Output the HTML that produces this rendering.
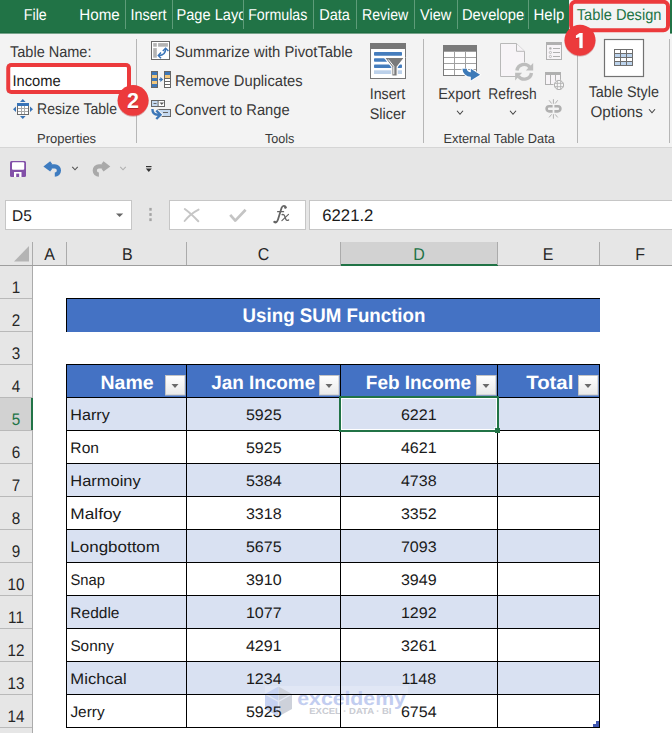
<!DOCTYPE html>
<html><head><meta charset="utf-8"><title>Excel Table Design</title>
<style>
html,body{margin:0;padding:0;width:672px;height:733px;overflow:hidden;background:#fff;}
body{position:relative;font-family:'Liberation Sans', sans-serif;}
</style></head><body>
<svg width="672" height="733" viewBox="0 0 672 733" text-rendering="geometricPrecision" style="position:absolute;left:0;top:0;font-family:'Liberation Sans', sans-serif"><defs><linearGradient id="ddg" x1="0" y1="0" x2="0" y2="1"><stop offset="0" stop-color="#ffffff"/><stop offset="1" stop-color="#e9e9e9"/></linearGradient></defs><rect x="0" y="0" width="672" height="33.8" fill="#217346"/><rect x="0" y="32.3" width="672" height="1.5" fill="#1c6a3f"/>
<rect x="0" y="33.6" width="672" height="114.4" fill="#f3f3f3"/>
<rect x="0" y="147" width="672" height="1" fill="#d5d5d5"/>
<rect x="0" y="148" width="672" height="118" fill="#e6e6e6"/>
<rect x="125" y="0" width="1" height="29" fill="#5e9c79"/>
<rect x="172" y="0" width="1" height="29" fill="#5e9c79"/>
<rect x="243" y="0" width="1" height="29" fill="#5e9c79"/>
<rect x="313" y="0" width="1" height="29" fill="#5e9c79"/>
<rect x="356" y="0" width="1" height="29" fill="#5e9c79"/>
<rect x="414" y="0" width="1" height="29" fill="#5e9c79"/>
<rect x="457" y="0" width="1" height="29" fill="#5e9c79"/>
<rect x="528" y="0" width="1" height="29" fill="#5e9c79"/>
<text x="23.8" y="20" font-size="15.8" fill="#ffffff" font-weight="400" textLength="22.92" lengthAdjust="spacingAndGlyphs">File</text>
<text x="79.32" y="20" font-size="15.8" fill="#ffffff" font-weight="400" textLength="40.41" lengthAdjust="spacingAndGlyphs">Home</text>
<text x="130.54" y="20" font-size="15.8" fill="#ffffff" font-weight="400" textLength="35.97" lengthAdjust="spacingAndGlyphs">Insert</text>
<text x="248.15" y="20" font-size="15.8" fill="#ffffff" font-weight="400" textLength="59.21" lengthAdjust="spacingAndGlyphs">Formulas</text>
<text x="319.14" y="20" font-size="15.8" fill="#ffffff" font-weight="400" textLength="30.75" lengthAdjust="spacingAndGlyphs">Data</text>
<text x="362.05" y="20" font-size="15.8" fill="#ffffff" font-weight="400" textLength="46.22" lengthAdjust="spacingAndGlyphs">Review</text>
<text x="420.06" y="20" font-size="15.8" fill="#ffffff" font-weight="400" textLength="31.25" lengthAdjust="spacingAndGlyphs">View</text>
<text x="533.53" y="20" font-size="15.8" fill="#ffffff" font-weight="400" textLength="30.77" lengthAdjust="spacingAndGlyphs">Help</text>
<svg x="0" y="0" width="243" height="33" overflow="hidden"><text x="176.5" y="20" font-size="15.8" fill="#ffffff" textLength="82" lengthAdjust="spacingAndGlyphs">Page Layout</text></svg>
<svg x="0" y="0" width="524.5" height="33" overflow="hidden"><text x="462" y="20" font-size="15.8" fill="#ffffff" textLength="67" lengthAdjust="spacingAndGlyphs">Developer</text></svg>
<rect x="569" y="0" width="101" height="34" fill="#f3f3f3"/>
<text x="576.8" y="20" font-size="15.8" fill="#217346" font-weight="400" textLength="84.67" lengthAdjust="spacingAndGlyphs">Table Design</text>
<rect x="571.1" y="1.8" width="96.9" height="28.4" rx="4.5" fill="none" stroke="#ec3a3c" stroke-width="4"/>
<text x="10.0" y="56.7" font-size="15.5" fill="#383838" font-weight="400" textLength="81.48" lengthAdjust="spacingAndGlyphs">Table Name:</text>
<rect x="8" y="65" width="121" height="27" fill="#ffffff" stroke="#5a5a5a" stroke-width="1"/>
<text x="12.42" y="85.8" font-size="15.5" fill="#1a1a1a" font-weight="400" textLength="48.3" lengthAdjust="spacingAndGlyphs">Income</text>
<rect x="8.25" y="65" width="120.75" height="27" rx="3" fill="none" stroke="#ec3a3c" stroke-width="4"/>
<text x="37.05" y="114.4" font-size="15.5" fill="#383838" font-weight="400" textLength="79.92" lengthAdjust="spacingAndGlyphs">Resize Table</text>
<text x="37.01" y="142.5" font-size="13.2" fill="#383838" font-weight="400" textLength="59.11" lengthAdjust="spacingAndGlyphs">Properties</text>
<rect x="136" y="39" width="1" height="104" fill="#b6b6b6"/>
<text x="174.92" y="57.3" font-size="15.5" fill="#383838" font-weight="400" textLength="177.95" lengthAdjust="spacingAndGlyphs">Summarize with PivotTable</text>
<text x="174.92" y="86.4" font-size="15.5" fill="#383838" font-weight="400" textLength="127.69" lengthAdjust="spacingAndGlyphs">Remove Duplicates</text>
<text x="174.53" y="115.2" font-size="15.5" fill="#383838" font-weight="400" textLength="115.07" lengthAdjust="spacingAndGlyphs">Convert to Range</text>
<text x="264.88" y="143" font-size="13.2" fill="#383838" font-weight="400" textLength="29.43" lengthAdjust="spacingAndGlyphs">Tools</text>
<text x="369.74" y="99" font-size="15.5" fill="#383838" font-weight="400" textLength="35.58" lengthAdjust="spacingAndGlyphs">Insert</text>
<text x="369.74" y="118.9" font-size="15.5" fill="#383838" font-weight="400" textLength="36.05" lengthAdjust="spacingAndGlyphs">Slicer</text>
<rect x="423" y="39" width="1" height="104" fill="#b6b6b6"/>
<text x="438.13" y="98.8" font-size="15.5" fill="#383838" font-weight="400" textLength="42.22" lengthAdjust="spacingAndGlyphs">Export</text>
<text x="488.36" y="98.8" font-size="15.5" fill="#383838" font-weight="400" textLength="48.3" lengthAdjust="spacingAndGlyphs">Refresh</text>
<text x="443.52" y="142.6" font-size="13.2" fill="#383838" font-weight="400" textLength="111.36" lengthAdjust="spacingAndGlyphs">External Table Data</text>
<rect x="577" y="39" width="1" height="104" fill="#b6b6b6"/>
<rect x="669" y="39" width="1" height="104" fill="#b6b6b6"/>
<text x="588.7" y="96.6" font-size="15.5" fill="#383838" font-weight="400" textLength="70.3" lengthAdjust="spacingAndGlyphs">Table Style</text>
<text x="590.51" y="116.7" font-size="15.5" fill="#383838" font-weight="400" textLength="52.41" lengthAdjust="spacingAndGlyphs">Options</text>
<path d="M457.0,110.75 L460,114.25 L463.0,110.75" fill="none" stroke="#444" stroke-width="1.1"/>
<path d="M510.0,110.75 L513,114.25 L516.0,110.75" fill="none" stroke="#444" stroke-width="1.1"/>
<path d="M649.0,109.25 L652,112.75 L655.0,109.25" fill="none" stroke="#444" stroke-width="1.1"/>
<g><rect x="17" y="103" width="12" height="12" fill="#6a6a6a"/><rect x="18" y="106" width="10" height="8" fill="#a8a8a8"/><rect x="17" y="103" width="12" height="3" fill="#3a74b7"/><rect x="18" y="106" width="3" height="2" fill="#fff"/><rect x="18" y="109" width="3" height="2" fill="#fff"/><rect x="18" y="112" width="3" height="2" fill="#fff"/><rect x="22" y="106" width="2" height="2" fill="#fff"/><rect x="22" y="109" width="2" height="2" fill="#fff"/><rect x="22" y="112" width="2" height="2" fill="#fff"/><rect x="25" y="106" width="3" height="2" fill="#fff"/><rect x="25" y="109" width="3" height="2" fill="#fff"/><rect x="25" y="112" width="3" height="2" fill="#fff"/><path d="M22.8,98.9 L20,101.9 H25.6 Z M22.8,119.1 L20,116.1 H25.6 Z M13,109.3 L16,106.6 V112 Z M33,109.3 L30,106.6 V112 Z" fill="#3a74b7"/></g>
<g><rect x="151.5" y="41.5" width="18" height="18" fill="#fff" stroke="#6a6a6a" stroke-width="1"/><rect x="153.2" y="43.1" width="3.6" height="3.6" fill="#b3b3b3"/><rect x="158.1" y="43.1" width="9.8" height="3.6" fill="#b3b3b3"/><rect x="153.2" y="48.1" width="3.6" height="9.6" fill="#b3b3b3"/><path d="M158.8,55.5 Q165.6,55.5 165.6,48.8" fill="none" stroke="#3a74b7" stroke-width="1.5"/><path d="M161,52.6 L158.3,55.5 L161,58.3 M162.8,51 L165.6,48.2 L168.4,51" fill="none" stroke="#3a74b7" stroke-width="1.5"/></g>
<rect x="151" y="71" width="7" height="17" fill="#666"/><rect x="152" y="72" width="5" height="3" fill="#3d77b8"/><rect x="152" y="75" width="5" height="3" fill="#f3c77a"/><rect x="152" y="78" width="5" height="3" fill="#3d77b8"/><rect x="152" y="81" width="5" height="3" fill="#f3c77a"/><rect x="152" y="84" width="5" height="3" fill="#3d77b8"/>
<rect x="164" y="71" width="7" height="17" fill="#666"/><rect x="165" y="72" width="5" height="3" fill="#3d77b8"/><rect x="165" y="75" width="5" height="3" fill="#f3c77a"/><rect x="165" y="79" width="5" height="2" fill="#fff"/><rect x="165" y="82" width="5" height="2" fill="#fff"/><rect x="165" y="85" width="5" height="2" fill="#fff"/>
<path d="M159,79.5 H162" stroke="#3d77b8" stroke-width="1.4" fill="none"/><path d="M160.3,76.9 L163.3,79.5 L160.3,82.1 Z" fill="#3d77b8"/>
<g><rect x="151.5" y="100.5" width="13" height="6" fill="#fff" stroke="#666" stroke-width="1"/><rect x="152" y="101" width="6" height="5" fill="#c5d9f0"/><rect x="157.6" y="101" width="1" height="5" fill="#666"/><path d="M153.5,103.5 H156.5" stroke="#666" stroke-width="1"/><path d="M159.5,102.4 H164 L161.75,105.1 Z" fill="#5a5a5a"/><rect x="157.5" y="109.5" width="13" height="7" fill="#c5d9f0" stroke="#666" stroke-width="1"/><path d="M163,112.5 H168" stroke="#666" stroke-width="1"/><path d="M152.4,109 Q152.4,114.8 158,114.8 H159.5" fill="none" stroke="#f3f3f3" stroke-width="4.4"/><path d="M156.3,110.5 L160.5,114.8 L156.3,119" fill="none" stroke="#f3f3f3" stroke-width="4.4"/><path d="M152.4,109 Q152.4,114.8 158,114.8 H159.5" fill="none" stroke="#3d77b8" stroke-width="2.4"/><path d="M156.3,110.5 L160.5,114.8 L156.3,119" fill="none" stroke="#3d77b8" stroke-width="2.4"/></g>
<g><rect x="370.5" y="43.5" width="35" height="35" fill="#fff" stroke="#777" stroke-width="1"/><rect x="370" y="43" width="36" height="6" fill="#777"/><rect x="374" y="52" width="28" height="3.7" rx="0.8" fill="#457dbd"/><rect x="374" y="58.2" width="28" height="3.5" rx="0.8" fill="#457dbd"/><rect x="374" y="64.5" width="28" height="3.5" rx="0.8" fill="#457dbd"/><rect x="374" y="70.3" width="28" height="3.7" fill="#bcd1ea"/><path d="M384.5,57.5 H404.5 L397.2,67 V76 H391.8 V67 Z" fill="#7a7a7a" stroke="#fff" stroke-width="1.2"/><path d="M388.3,59.5 L393.8,66.4 V74.3" fill="none" stroke="#fff" stroke-width="1"/></g>
<g><rect x="443" y="45" width="34" height="31" fill="#7a7a7a"/><rect x="444" y="51" width="32" height="24" fill="#a0a0a0"/><rect x="444" y="52" width="10" height="5" fill="#fff"/><rect x="444" y="58" width="10" height="5" fill="#fff"/><rect x="444" y="64" width="10" height="5" fill="#fff"/><rect x="444" y="70" width="10" height="5" fill="#fff"/><rect x="455" y="52" width="10" height="5" fill="#fff"/><rect x="455" y="58" width="10" height="5" fill="#fff"/><rect x="455" y="64" width="10" height="5" fill="#fff"/><rect x="455" y="70" width="10" height="5" fill="#fff"/><rect x="466" y="52" width="10" height="5" fill="#fff"/><rect x="466" y="58" width="10" height="5" fill="#fff"/><rect x="466" y="64" width="10" height="5" fill="#fff"/><rect x="466" y="70" width="10" height="5" fill="#fff"/><path d="M464.6,68.4 A6.1,6.1 0 0 0 470.7,74.5 H472.5" fill="none" stroke="#ffffff" stroke-width="6.6"/><path d="M470.8,68.8 L480.1,74.7 L470.8,80.6 Z" fill="#ffffff" stroke="#ffffff" stroke-width="1.6"/><path d="M464.6,68.8 A5.9,5.9 0 0 0 470.7,74.5 H472.5" fill="none" stroke="#3d7ab8" stroke-width="4.4"/><path d="M470.8,68.8 L480.1,74.7 L470.8,80.6 Z" fill="#3d7ab8"/></g>
<g><path d="M500.5,43.5 H516.5 L524.5,51.3 V76.5 H500.5 Z" fill="#f7f4f7" stroke="#b8b8b8" stroke-width="1"/><path d="M516.5,43.5 V51.3 H524.5" fill="#f7f4f7" stroke="#b8b8b8" stroke-width="1"/><circle cx="524.2" cy="71.8" r="9.6" fill="#f3f3f3"/><path d="M516.95,70.6 A7.25,7.25 0 0 1 529.9,67.3" fill="none" stroke="#bdbdbd" stroke-width="3.4"/><path d="M533.2,63.1 V70.5 H525.8 Z" fill="#bdbdbd"/><path d="M531.45,72.9 A7.25,7.25 0 0 1 518.5,76.2" fill="none" stroke="#bdbdbd" stroke-width="3.4"/><path d="M515.1,72.8 V80.5 H515.1 L522.1,72.8 Z" fill="#bdbdbd"/></g>
<g fill="none"><rect x="546.5" y="42.5" width="15" height="17" fill="#f7f4f7" stroke="#b0b0b0" stroke-width="1"/><rect x="546" y="42" width="16" height="3" fill="#b0b0b0"/><path d="M553,48.5 H560 M553,52.5 H560 M553,56.5 H560" stroke="#b0b0b0" stroke-width="1"/><circle cx="550.4" cy="48.4" r="1.2" fill="#b0b0b0"/><circle cx="550.4" cy="52.5" r="1.1" stroke="#b0b0b0" stroke-width="0.8"/><circle cx="550.4" cy="56.5" r="1.1" stroke="#b0b0b0" stroke-width="0.8"/><rect x="545.5" y="72.5" width="15" height="12" fill="#f7f4f7" stroke="#b0b0b0" stroke-width="1"/><rect x="545" y="72" width="16" height="3" fill="#b0b0b0"/><path d="M550.5,75 V85 M555.5,75 V85" stroke="#b0b0b0" stroke-width="1"/><circle cx="559" cy="85" r="5.6" fill="#f3f3f3"/><circle cx="559" cy="85" r="4.6" fill="#f7f7f7" stroke="#b0b0b0" stroke-width="1"/><path d="M554.4,83.3 H563.6 M554.4,86.7 H563.6 M557.3,80.4 V89.6 M560.7,80.4 V89.6" stroke="#b0b0b0" stroke-width="0.9"/><path d="M552.6,106.2 H549.2 A2.6,2.6 0 0 0 549.2,111.4 H552.6" stroke="#b0b0b0" stroke-width="2.6"/><path d="M554.4,106.2 H557.8 A2.6,2.6 0 0 1 557.8,111.4 H554.4" stroke="#b0b0b0" stroke-width="2.6"/><path d="M553.4,99.2 V103.7 M553.4,114.2 V118.7 M549.1,100.3 L551.6,103.5 M557.7,100.3 L555.2,103.5 M549.1,117.4 L551.6,114.4 M557.7,117.4 L555.2,114.4" stroke="#b0b0b0" stroke-width="1"/></g>
<rect x="604.5" y="39.5" width="39" height="37" fill="#ffffff" stroke="#727272" stroke-width="1.2"/>
<rect x="614" y="49" width="19" height="17" fill="#6e6e6e"/><rect x="615" y="50" width="5" height="3" fill="#ffffff"/><rect x="615" y="54" width="5" height="3" fill="#bcd3ec"/><rect x="615" y="58" width="5" height="3" fill="#ffffff"/><rect x="615" y="62" width="5" height="3" fill="#bcd3ec"/><rect x="621" y="50" width="5" height="3" fill="#ffffff"/><rect x="621" y="54" width="5" height="3" fill="#bcd3ec"/><rect x="621" y="58" width="5" height="3" fill="#ffffff"/><rect x="621" y="62" width="5" height="3" fill="#bcd3ec"/><rect x="627" y="50" width="5" height="3" fill="#ffffff"/><rect x="627" y="54" width="5" height="3" fill="#bcd3ec"/><rect x="627" y="58" width="5" height="3" fill="#ffffff"/><rect x="627" y="62" width="5" height="3" fill="#bcd3ec"/>
<g><rect x="10" y="161" width="16" height="16" rx="1.5" fill="#8250a8"/><rect x="12" y="162.2" width="12.2" height="7.5" rx="1" fill="#fff"/><rect x="14" y="172" width="7.5" height="5" fill="#fff"/><rect x="16.2" y="173.6" width="3" height="3.4" fill="#8250a8"/></g>
<path d="M47.5,166.4 H54.8 A4.1,4.1 0 0 1 54.8,174.65 H55.6" fill="none" stroke="#3e7cc0" stroke-width="4.2"/><path d="M51.2,162.6 L46.2,166.4 L51.2,170.2" fill="none" stroke="#3e7cc0" stroke-width="3.4" stroke-linejoin="miter" stroke-miterlimit="6"/>
<path d="M72.25,166.8 L75,169.8 L77.75,166.8" fill="none" stroke="#555" stroke-width="1.1"/>
<g transform="matrix(-1,0,0,1,153.7,0)"><path d="M47.5,166.4 H54.8 A4.1,4.1 0 0 1 54.8,174.65 H55.6" fill="none" stroke="#a9a9a9" stroke-width="4.2"/><path d="M51.2,162.6 L46.2,166.4 L51.2,170.2" fill="none" stroke="#a9a9a9" stroke-width="3.4" stroke-linejoin="miter" stroke-miterlimit="6"/></g>
<path d="M120.25,166.8 L123,169.8 L125.75,166.8" fill="none" stroke="#b0b0b0" stroke-width="1.1"/>
<rect x="146" y="166" width="5.5" height="1.2" fill="#333"/>
<path d="M145.8,168.5 H151.8 L148.8,172 Z" fill="#333"/>
<rect x="5.5" y="200.5" width="126" height="29" fill="#fff" stroke="#c6c6c6" stroke-width="1"/>
<text x="12.1" y="220.9" font-size="15.5" fill="#1a1a1a" font-weight="400" textLength="19.83" lengthAdjust="spacingAndGlyphs">D5</text>
<path d="M116,213.5 H123.2 L119.6,217 Z" fill="#666"/>
<rect x="149.3" y="207.9" width="2.4" height="2.8" fill="#a4a4a4"/>
<rect x="149.3" y="213.1" width="2.4" height="2.8" fill="#a4a4a4"/>
<rect x="149.3" y="218.3" width="2.4" height="2.8" fill="#a4a4a4"/>
<rect x="169.5" y="200.5" width="136" height="29" fill="#fff" stroke="#c6c6c6" stroke-width="1"/>
<path d="M184.8,209 Q191,213.5 198.3,221.3" stroke="#c6c6c6" stroke-width="2" fill="none" stroke-linecap="round"/><path d="M198.6,209.6 Q190,214 184.6,221" stroke="#c6c6c6" stroke-width="1.9" fill="none" stroke-linecap="round"/>
<path d="M230.2,214.8 L235.3,220.6 L245.6,209.8" fill="none" stroke="#c4c4c4" stroke-width="2.7" stroke-linejoin="round"/>
<g fill="none" stroke="#646464" stroke-linecap="round"><path d="M285.9,207.4 C285.2,205.4 282.6,205.2 281.6,207.8 L278,219.6 C277.3,222 275.6,223.2 274.3,221.9" stroke-width="1.8"/><path d="M277.6,211.7 H283.6" stroke-width="1.2"/><path d="M282.1,214.7 C283.4,214.1 284.3,214.9 284.8,216.4 L285.8,219.2 C286.3,220.6 287.5,220.8 288.6,219.9" stroke-width="1.3"/><path d="M288.5,214.4 L281.9,220.6" stroke-width="1.2"/></g><circle cx="285.3" cy="207.6" r="1.2" fill="#646464"/><circle cx="274.8" cy="221.9" r="1.2" fill="#646464"/>
<rect x="309.5" y="200.5" width="370" height="29" fill="#fff" stroke="#c6c6c6" stroke-width="1"/>
<text x="322.3" y="221.3" font-size="16.8" fill="#1a1a1a" font-weight="400" textLength="51.02" lengthAdjust="spacingAndGlyphs">6221.2</text>
<rect x="0" y="242" width="672" height="23" fill="#e6e6e6"/>
<rect x="341" y="242" width="156" height="22" fill="#d2d2d2"/>
<rect x="341" y="264" width="157" height="2" fill="#217346"/>
<path d="M14,261.5 L29,261.5 L29,246 Z" fill="#b4b4b4"/>
<rect x="0" y="265" width="341" height="1" fill="#9e9e9e"/>
<rect x="498" y="265" width="174" height="1" fill="#9e9e9e"/>
<rect x="32" y="242" width="1" height="23" fill="#ababab"/>
<rect x="66" y="242" width="1" height="23" fill="#ababab"/>
<rect x="186" y="242" width="1" height="23" fill="#ababab"/>
<rect x="340" y="242" width="1" height="23" fill="#ababab"/>
<rect x="497" y="242" width="1" height="23" fill="#ababab"/>
<rect x="599" y="242" width="1" height="23" fill="#ababab"/>
<g transform="translate(49.5,259.6) scale(0.93,1)"><text x="0" y="0" font-size="17.2" fill="#262626" font-weight="400" text-anchor="middle" >A</text></g>
<g transform="translate(127.3,259.6) scale(0.93,1)"><text x="0" y="0" font-size="17.2" fill="#262626" font-weight="400" text-anchor="middle" >B</text></g>
<g transform="translate(263.5,259.6) scale(0.93,1)"><text x="0" y="0" font-size="17.2" fill="#262626" font-weight="400" text-anchor="middle" >C</text></g>
<g transform="translate(419,259.6) scale(0.93,1)"><text x="0" y="0" font-size="17.2" fill="#217346" font-weight="400" text-anchor="middle" >D</text></g>
<g transform="translate(548,259.6) scale(0.93,1)"><text x="0" y="0" font-size="17.2" fill="#262626" font-weight="400" text-anchor="middle" >E</text></g>
<g transform="translate(640.2,259.6) scale(0.93,1)"><text x="0" y="0" font-size="17.2" fill="#262626" font-weight="400" text-anchor="middle" >F</text></g>
<rect x="0" y="266" width="672" height="467" fill="#ffffff"/>
<rect x="0" y="266" width="32" height="467" fill="#e6e6e6"/>
<rect x="0" y="398" width="31" height="32" fill="#d2d2d2"/>
<rect x="0" y="298" width="32" height="1" fill="#b9b9b9"/>
<rect x="0" y="331" width="32" height="1" fill="#b9b9b9"/>
<rect x="0" y="364" width="32" height="1" fill="#b9b9b9"/>
<rect x="0" y="397" width="32" height="1" fill="#b9b9b9"/>
<rect x="0" y="430" width="32" height="1" fill="#b9b9b9"/>
<rect x="0" y="463" width="32" height="1" fill="#b9b9b9"/>
<rect x="0" y="496" width="32" height="1" fill="#b9b9b9"/>
<rect x="0" y="529" width="32" height="1" fill="#b9b9b9"/>
<rect x="0" y="562" width="32" height="1" fill="#b9b9b9"/>
<rect x="0" y="595" width="32" height="1" fill="#b9b9b9"/>
<rect x="0" y="628" width="32" height="1" fill="#b9b9b9"/>
<rect x="0" y="661" width="32" height="1" fill="#b9b9b9"/>
<rect x="0" y="694" width="32" height="1" fill="#b9b9b9"/>
<rect x="0" y="727" width="32" height="1" fill="#b9b9b9"/>
<rect x="32" y="266" width="1" height="467" fill="#ababab"/>
<rect x="31" y="398" width="2" height="32" fill="#217346"/>
<g transform="translate(16,293) scale(0.9,1)"><text x="0" y="0" font-size="16.9" fill="#262626" font-weight="400" text-anchor="middle" >1</text></g>
<g transform="translate(16,326) scale(0.9,1)"><text x="0" y="0" font-size="16.9" fill="#262626" font-weight="400" text-anchor="middle" >2</text></g>
<g transform="translate(16,359) scale(0.9,1)"><text x="0" y="0" font-size="16.9" fill="#262626" font-weight="400" text-anchor="middle" >3</text></g>
<g transform="translate(16,392) scale(0.9,1)"><text x="0" y="0" font-size="16.9" fill="#262626" font-weight="400" text-anchor="middle" >4</text></g>
<g transform="translate(16,425) scale(0.9,1)"><text x="0" y="0" font-size="16.9" fill="#217346" font-weight="400" text-anchor="middle" >5</text></g>
<g transform="translate(16,458) scale(0.9,1)"><text x="0" y="0" font-size="16.9" fill="#262626" font-weight="400" text-anchor="middle" >6</text></g>
<g transform="translate(16,491) scale(0.9,1)"><text x="0" y="0" font-size="16.9" fill="#262626" font-weight="400" text-anchor="middle" >7</text></g>
<g transform="translate(16,524) scale(0.9,1)"><text x="0" y="0" font-size="16.9" fill="#262626" font-weight="400" text-anchor="middle" >8</text></g>
<g transform="translate(16,557) scale(0.9,1)"><text x="0" y="0" font-size="16.9" fill="#262626" font-weight="400" text-anchor="middle" >9</text></g>
<g transform="translate(16,590) scale(0.9,1)"><text x="0" y="0" font-size="16.9" fill="#262626" font-weight="400" text-anchor="middle" >10</text></g>
<g transform="translate(16,623) scale(0.9,1)"><text x="0" y="0" font-size="16.9" fill="#262626" font-weight="400" text-anchor="middle" >11</text></g>
<g transform="translate(16,656) scale(0.9,1)"><text x="0" y="0" font-size="16.9" fill="#262626" font-weight="400" text-anchor="middle" >12</text></g>
<g transform="translate(16,689) scale(0.9,1)"><text x="0" y="0" font-size="16.9" fill="#262626" font-weight="400" text-anchor="middle" >13</text></g>
<g transform="translate(16,722) scale(0.9,1)"><text x="0" y="0" font-size="16.9" fill="#262626" font-weight="400" text-anchor="middle" >14</text></g>
<rect x="66" y="298" width="534" height="1" fill="#000"/>
<rect x="66" y="298" width="1" height="34" fill="#000"/>
<rect x="67" y="299" width="533" height="33" fill="#4472c4"/>
<text x="242.62" y="321.6" font-size="19.6" fill="#ffffff" font-weight="700" textLength="182.81" lengthAdjust="spacingAndGlyphs">Using SUM Function</text>
<rect x="67" y="365" width="532" height="32" fill="#4472c4"/>
<rect x="67" y="398" width="532" height="32" fill="#d9e1f2"/>
<rect x="67" y="431" width="532" height="32" fill="#ffffff"/>
<rect x="67" y="464" width="532" height="32" fill="#d9e1f2"/>
<rect x="67" y="497" width="532" height="32" fill="#ffffff"/>
<rect x="67" y="530" width="532" height="32" fill="#d9e1f2"/>
<rect x="67" y="563" width="532" height="32" fill="#ffffff"/>
<rect x="67" y="596" width="532" height="32" fill="#d9e1f2"/>
<rect x="67" y="629" width="532" height="32" fill="#ffffff"/>
<rect x="67" y="662" width="532" height="32" fill="#d9e1f2"/>
<rect x="67" y="695" width="532" height="32" fill="#ffffff"/>
<rect x="265" y="686" width="143" height="33" fill="#ffffff" opacity="0.22"/>
<path d="M278.5,686.5 L292,694 V709 L278.5,716.5 Z" fill="#cdd1da"/>
<path d="M278.5,686.5 L265,694 V709 L278.5,716.5 Z" fill="#c6d2f2"/>
<path d="M278.5,701.5 L291.5,694.2 M278.5,701.5 V716 M278.5,701.5 L265.5,694.2" stroke="#e4e8f2" stroke-width="1.4" fill="none"/>
<text x="297.3" y="704.6" font-size="19.5" fill="#c2cdf0" font-weight="700" text-anchor="start" textLength="108.5" lengthAdjust="spacingAndGlyphs">exceldemy</text>
<text x="309.3" y="713.9" font-size="8.8" fill="#c9cbd2" font-weight="700" text-anchor="start" textLength="82.2" lengthAdjust="spacingAndGlyphs">EXCEL · DATA · BI</text>
<rect x="66" y="364" width="534" height="1" fill="#000"/>
<rect x="66" y="397" width="534" height="1" fill="#000"/>
<rect x="66" y="430" width="534" height="1" fill="#000"/>
<rect x="66" y="463" width="534" height="1" fill="#000"/>
<rect x="66" y="496" width="534" height="1" fill="#000"/>
<rect x="66" y="529" width="534" height="1" fill="#000"/>
<rect x="66" y="562" width="534" height="1" fill="#000"/>
<rect x="66" y="595" width="534" height="1" fill="#000"/>
<rect x="66" y="628" width="534" height="1" fill="#000"/>
<rect x="66" y="661" width="534" height="1" fill="#000"/>
<rect x="66" y="694" width="534" height="1" fill="#000"/>
<rect x="66" y="727" width="534" height="1" fill="#000"/>
<rect x="66" y="364" width="1" height="364" fill="#000"/>
<rect x="186" y="364" width="1" height="364" fill="#000"/>
<rect x="340" y="364" width="1" height="364" fill="#000"/>
<rect x="497" y="364" width="1" height="364" fill="#000"/>
<rect x="599" y="364" width="1" height="364" fill="#000"/>
<text x="100.5" y="388.6" font-size="19.3" fill="#ffffff" font-weight="700" textLength="53.02" lengthAdjust="spacingAndGlyphs">Name</text>
<text x="211.21" y="388.6" font-size="19.3" fill="#ffffff" font-weight="700" textLength="103.97" lengthAdjust="spacingAndGlyphs">Jan Income</text>
<text x="365.81" y="388.6" font-size="19.3" fill="#ffffff" font-weight="700" textLength="105.34" lengthAdjust="spacingAndGlyphs">Feb Income</text>
<text x="526.23" y="388.6" font-size="19.3" fill="#ffffff" font-weight="700" textLength="47.06" lengthAdjust="spacingAndGlyphs">Total</text>
<rect x="165.5" y="375.5" width="19.5" height="19.5" fill="url(#ddg)" stroke="#c4c4c4" stroke-width="1"/><path d="M171.5,384 H178.5 L175,388 Z" fill="#6a6a6a"/>
<rect x="319.5" y="375.5" width="19.5" height="19.5" fill="url(#ddg)" stroke="#c4c4c4" stroke-width="1"/><path d="M325.5,384 H332.5 L329,388 Z" fill="#6a6a6a"/>
<rect x="476.5" y="375.5" width="19.5" height="19.5" fill="url(#ddg)" stroke="#c4c4c4" stroke-width="1"/><path d="M482.5,384 H489.5 L486,388 Z" fill="#6a6a6a"/>
<rect x="578.5" y="375.5" width="19.5" height="19.5" fill="url(#ddg)" stroke="#c4c4c4" stroke-width="1"/><path d="M584.5,384 H591.5 L588,388 Z" fill="#6a6a6a"/>
<text x="70.37" y="420" font-size="15.3" fill="#1a1a1a" font-weight="400" textLength="39.33" lengthAdjust="spacingAndGlyphs">Harry</text>
<g transform="translate(263.8,420) scale(1.05,1)"><text x="0" y="0" font-size="15.3" fill="#1a1a1a" font-weight="400" text-anchor="middle" >5925</text></g>
<g transform="translate(418.8,420) scale(1.05,1)"><text x="0" y="0" font-size="15.3" fill="#1a1a1a" font-weight="400" text-anchor="middle" >6221</text></g>
<text x="70.39" y="453" font-size="15.3" fill="#1a1a1a" font-weight="400" textLength="28.58" lengthAdjust="spacingAndGlyphs">Ron</text>
<g transform="translate(263.8,453) scale(1.05,1)"><text x="0" y="0" font-size="15.3" fill="#1a1a1a" font-weight="400" text-anchor="middle" >5925</text></g>
<g transform="translate(418.8,453) scale(1.05,1)"><text x="0" y="0" font-size="15.3" fill="#1a1a1a" font-weight="400" text-anchor="middle" >4621</text></g>
<text x="70.36" y="486" font-size="15.3" fill="#1a1a1a" font-weight="400" textLength="70.34" lengthAdjust="spacingAndGlyphs">Harmoiny</text>
<g transform="translate(263.8,486) scale(1.05,1)"><text x="0" y="0" font-size="15.3" fill="#1a1a1a" font-weight="400" text-anchor="middle" >5384</text></g>
<g transform="translate(418.8,486) scale(1.05,1)"><text x="0" y="0" font-size="15.3" fill="#1a1a1a" font-weight="400" text-anchor="middle" >4738</text></g>
<text x="70.34" y="519" font-size="15.3" fill="#1a1a1a" font-weight="400" textLength="50.87" lengthAdjust="spacingAndGlyphs">Malfoy</text>
<g transform="translate(263.8,519) scale(1.05,1)"><text x="0" y="0" font-size="15.3" fill="#1a1a1a" font-weight="400" text-anchor="middle" >3318</text></g>
<g transform="translate(418.8,519) scale(1.05,1)"><text x="0" y="0" font-size="15.3" fill="#1a1a1a" font-weight="400" text-anchor="middle" >3352</text></g>
<text x="70.35" y="552" font-size="15.3" fill="#1a1a1a" font-weight="400" textLength="89.58" lengthAdjust="spacingAndGlyphs">Longbottom</text>
<g transform="translate(263.8,552) scale(1.05,1)"><text x="0" y="0" font-size="15.3" fill="#1a1a1a" font-weight="400" text-anchor="middle" >5675</text></g>
<g transform="translate(418.8,552) scale(1.05,1)"><text x="0" y="0" font-size="15.3" fill="#1a1a1a" font-weight="400" text-anchor="middle" >7093</text></g>
<text x="70.42" y="585" font-size="15.3" fill="#1a1a1a" font-weight="400" textLength="34.51" lengthAdjust="spacingAndGlyphs">Snap</text>
<g transform="translate(263.8,585) scale(1.05,1)"><text x="0" y="0" font-size="15.3" fill="#1a1a1a" font-weight="400" text-anchor="middle" >3910</text></g>
<g transform="translate(418.8,585) scale(1.05,1)"><text x="0" y="0" font-size="15.3" fill="#1a1a1a" font-weight="400" text-anchor="middle" >3949</text></g>
<text x="70.39" y="618" font-size="15.3" fill="#1a1a1a" font-weight="400" textLength="49.09" lengthAdjust="spacingAndGlyphs">Reddle</text>
<g transform="translate(263.8,618) scale(1.05,1)"><text x="0" y="0" font-size="15.3" fill="#1a1a1a" font-weight="400" text-anchor="middle" >1077</text></g>
<g transform="translate(418.8,618) scale(1.05,1)"><text x="0" y="0" font-size="15.3" fill="#1a1a1a" font-weight="400" text-anchor="middle" >1292</text></g>
<text x="70.4" y="651" font-size="15.3" fill="#1a1a1a" font-weight="400" textLength="43.48" lengthAdjust="spacingAndGlyphs">Sonny</text>
<g transform="translate(263.8,651) scale(1.05,1)"><text x="0" y="0" font-size="15.3" fill="#1a1a1a" font-weight="400" text-anchor="middle" >4291</text></g>
<g transform="translate(418.8,651) scale(1.05,1)"><text x="0" y="0" font-size="15.3" fill="#1a1a1a" font-weight="400" text-anchor="middle" >3261</text></g>
<text x="70.36" y="684" font-size="15.3" fill="#1a1a1a" font-weight="400" textLength="56.33" lengthAdjust="spacingAndGlyphs">Michcal</text>
<g transform="translate(263.8,684) scale(1.05,1)"><text x="0" y="0" font-size="15.3" fill="#1a1a1a" font-weight="400" text-anchor="middle" >1234</text></g>
<g transform="translate(418.8,684) scale(1.05,1)"><text x="0" y="0" font-size="15.3" fill="#1a1a1a" font-weight="400" text-anchor="middle" >1148</text></g>
<text x="70.4" y="717" font-size="15.3" fill="#1a1a1a" font-weight="400" textLength="34.2" lengthAdjust="spacingAndGlyphs">Jerry</text>
<g transform="translate(263.8,717) scale(1.05,1)"><text x="0" y="0" font-size="15.3" fill="#1a1a1a" font-weight="400" text-anchor="middle" >5925</text></g>
<g transform="translate(418.8,717) scale(1.05,1)"><text x="0" y="0" font-size="15.3" fill="#1a1a1a" font-weight="400" text-anchor="middle" >6754</text></g>
<rect x="340" y="397" width="158" height="34" fill="none" stroke="#217346" stroke-width="2"/>
<rect x="341.5" y="398.5" width="155" height="31" fill="none" stroke="#ffffff" stroke-width="1"/>
<rect x="495" y="428" width="5" height="5" fill="#217346"/>
<rect x="494" y="427" width="1" height="1" fill="#fff"/>
<path d="M596,721 H599 V727 H593 V724 H596 Z" fill="#3f56b0"/>
<circle cx="580" cy="40.900000000000006" r="15.6" fill="#a82427" opacity="0.35"/><circle cx="580" cy="40.2" r="15.45" fill="#ec3a3c"/><g transform="translate(0,0.8)" opacity="0.45"><path d="M582.7,32.9 V48.3 H579.3 V37.2 L575.9,38.2 V35.4 L579.6,32.9 Z" fill="#6d1414"/></g><path d="M582.7,32.9 V48.3 H579.3 V37.2 L575.9,38.2 V35.4 L579.6,32.9 Z" fill="#ffffff"/>
<circle cx="133.1" cy="101.10000000000001" r="15.6" fill="#a82427" opacity="0.35"/><circle cx="133.1" cy="100.4" r="15.45" fill="#ec3a3c"/><g transform="translate(0,0.8)" opacity="0.45"><text x="133.1" y="108.2" font-size="21.5" font-weight="700" fill="#6d1414" text-anchor="middle">2</text></g><text x="133.1" y="108.2" font-size="21.5" font-weight="700" fill="#ffffff" text-anchor="middle">2</text></svg>
</body></html>
